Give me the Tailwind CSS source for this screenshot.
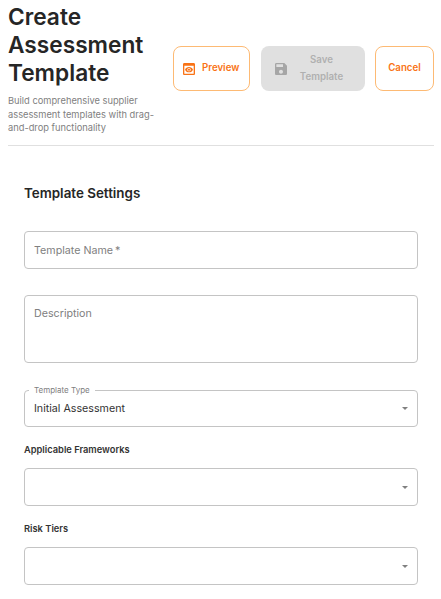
<!DOCTYPE html>
<html lang="en">

<head>
    <meta charset="UTF-8">
    <meta name="viewport" content="width=device-width, initial-scale=1.0">
    <title>Create Assessment Template</title>
    <script src="https://cdn.jsdelivr.net/npm/@tailwindcss/browser@4"></script>
</head>

<body class="bg-white font-['Inter',sans-serif] overflow-hidden h-[599px]">
    <!-- Header -->
    <header class="ml-2 mr-[7px] h-[146px] border-b border-[#e0e0e0] flex items-start">
        <div class="w-[165px] shrink-0 pt-[3px]">
            <h1 class="text-[22.7px] leading-[28px] font-semibold text-[#262626]">Create Assessment Template</h1>
            <p class="mt-[7px] text-[9.3px] leading-[13.5px] text-[#808080]">Build comprehensive supplier assessment templates with drag-and-drop functionality</p>
        </div>
        <div class="mt-[46px] flex items-stretch h-[45px]">
            <button class="w-[77px] border border-[#fdba74] rounded-lg flex items-center pl-[7px] gap-[5px] text-[9.7px] font-semibold text-[#f97316]">
                <svg class="w-4 h-4" viewBox="0 0 24 24" fill="#f97316"><path d="M19 3H5c-1.110 0-2 .9-2 2v14c0 1.100.89 2 2 2h14c1.100 0 2-.9 2-2V5c0-1.100-.89-2-2-2zm0 16H5V7h14v12zm-5.500-6c0 .83-.67 1.500-1.500 1.500s-1.500-.67-1.500-1.500.67-1.500 1.500-1.500 1.500.67 1.500 1.500zM12 9c-2.730 0-5.060 1.660-6 4 .94 2.340 3.270 4 6 4s5.060-1.660 6-4c-.94-2.340-3.270-4-6-4zm0 6.500c-1.380 0-2.500-1.120-2.500-2.500s1.120-2.500 2.500-2.500 2.500 1.120 2.500 2.500-1.120 2.500-2.500 2.500z"/></svg>
                Preview
            </button>
            <button class="ml-[11px] w-[104px] bg-[#e0e0e0] rounded-lg flex items-center pl-[12px] text-[9.7px] font-semibold text-[#b0b0b0]">
                <svg class="w-4 h-4 shrink-0" viewBox="0 0 24 24" fill="#a6a6a6"><path d="M17 3H5c-1.110 0-2 .9-2 2v14c0 1.100.89 2 2 2h14c1.100 0 2-.9 2-2V7l-4-4zm-5 16c-1.660 0-3-1.340-3-3s1.340-3 3-3 3 1.340 3 3-1.340 3-3 3zm3-10H5V5h10v4z"/></svg>
                <span class="flex-1 text-center leading-[17px] pr-[11px] -mt-[1px]">Save<br>Template</span>
            </button>
            <button class="ml-[10px] w-[59px] border border-[#fdba74] rounded-lg text-[9.7px] font-semibold text-[#f97316]">Cancel</button>
        </div>
    </header>

    <!-- Template settings -->
    <main class="pl-6 pr-[23px] pt-[37px]">
        <h2 class="text-[13.4px] leading-[20px] font-semibold text-[#262626]">Template Settings</h2>

        <input type="text" placeholder="Template Name&thinsp;*" class="mt-[28px] block w-full h-[38px] border border-[#c4c4c4] rounded-[4px] px-[9px] text-[10.7px] placeholder:text-[#808080] outline-none">

        <textarea placeholder="Description" class="mt-[26px] block w-full h-[68px] border border-[#c4c4c4] rounded-[4px] px-[9px] py-[10px] text-[10.7px] placeholder:text-[#808080] outline-none resize-none"></textarea>

        <div class="relative mt-[27px] h-[37px] border border-[#c4c4c4] rounded-[4px] flex items-center justify-between pl-[9px] pr-[9px]">
            <span class="absolute -top-[6px] left-[4px] bg-white px-[5px] text-[8px] leading-[10px] text-[#808080]">Template Type</span>
            <span class="pt-[1px] text-[10.7px] text-[#333333]">Initial Assessment</span>
            <span class="w-0 h-0 border-x-[3.5px] border-x-transparent border-t-[3.5px] border-t-[#808080]"></span>
        </div>

        <h3 class="mt-[17px] text-[9.3px] leading-[12px] font-semibold text-[#333333]">Applicable Frameworks</h3>
        <div class="mt-[12px] h-[38px] border border-[#c4c4c4] rounded-[4px] flex items-center justify-end pr-[9px]">
            <span class="w-0 h-0 border-x-[3.5px] border-x-transparent border-t-[3.5px] border-t-[#808080]"></span>
        </div>

        <h3 class="mt-[17px] text-[9.3px] leading-[12px] font-semibold text-[#333333]">Risk Tiers</h3>
        <div class="mt-[12px] h-[38px] border border-[#c4c4c4] rounded-[4px] flex items-center justify-end pr-[9px]">
            <span class="w-0 h-0 border-x-[3.5px] border-x-transparent border-t-[3.5px] border-t-[#808080]"></span>
        </div>
    </main>
</body>

</html>
